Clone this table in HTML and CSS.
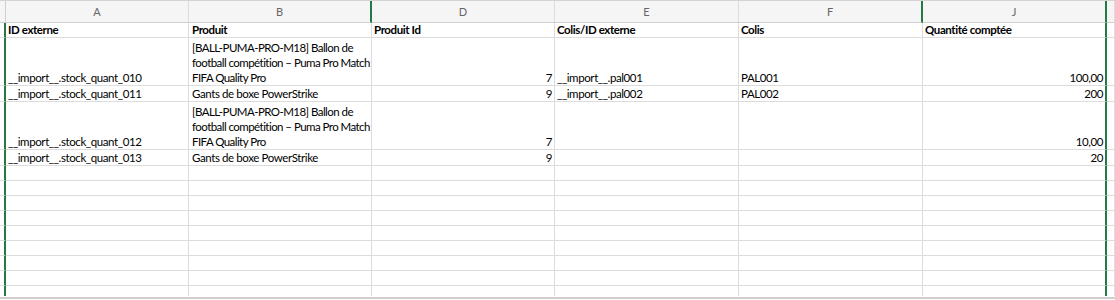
FILE: index.html
```html
<!DOCTYPE html>
<html lang="fr">
<head>
    <meta charset="UTF-8">
    <meta name="viewport" content="width=device-width, initial-scale=1.0">
    <title>stock_quant export</title>
    <link rel="stylesheet" href="styles.css">
</head>
<body>
    <div class="sheet">
        <table class="grid">
            <colgroup>
                <col class="c-stub">
                <col class="c-a">
                <col class="c-b">
                <col class="c-d">
                <col class="c-e">
                <col class="c-f">
                <col class="c-j">
                <col class="c-rest">
            </colgroup>
            <thead>
                <tr class="col-heads">
                    <th></th>
                    <th>A</th>
                    <th class="hidden-after">B</th>
                    <th>D</th>
                    <th>E</th>
                    <th class="hidden-after">F</th>
                    <th class="edge">J</th>
                    <th></th>
                </tr>
            </thead>
            <tbody>
                <tr class="row">
                    <td class="stub"></td>
                    <td class="bold">ID externe</td>
                    <td class="bold">Produit</td>
                    <td class="bold">Produit Id</td>
                    <td class="bold">Colis/ID externe</td>
                    <td class="bold">Colis</td>
                    <td class="bold edge">Quantité comptée</td>
                    <td></td>
                </tr>
                <tr class="row tall">
                    <td class="stub"></td>
                    <td>__import__.stock_quant_010</td>
                    <td class="wrap">[BALL-PUMA-PRO-M18] Ballon de<br>football compétition – Puma Pro Match<br>FIFA Quality Pro</td>
                    <td class="num">7</td>
                    <td>__import__.pal001</td>
                    <td>PAL001</td>
                    <td class="num edge">100,00</td>
                    <td></td>
                </tr>
                <tr class="row mid">
                    <td class="stub"></td>
                    <td>__import__.stock_quant_011</td>
                    <td>Gants de boxe PowerStrike</td>
                    <td class="num">9</td>
                    <td>__import__.pal002</td>
                    <td>PAL002</td>
                    <td class="num edge">200</td>
                    <td></td>
                </tr>
                <tr class="row tall">
                    <td class="stub"></td>
                    <td>__import__.stock_quant_012</td>
                    <td class="wrap">[BALL-PUMA-PRO-M18] Ballon de<br>football compétition – Puma Pro Match<br>FIFA Quality Pro</td>
                    <td class="num">7</td>
                    <td></td>
                    <td></td>
                    <td class="num edge">10,00</td>
                    <td></td>
                </tr>
                <tr class="row mid">
                    <td class="stub"></td>
                    <td>__import__.stock_quant_013</td>
                    <td>Gants de boxe PowerStrike</td>
                    <td class="num">9</td>
                    <td></td>
                    <td></td>
                    <td class="num edge">20</td>
                    <td></td>
                </tr>
            </tbody>
            <tbody id="blank-rows"></tbody>
        </table>
    </div>
    <div class="hscroll"></div>

    <script>
        // empty rows below the data
        const blankBody = document.getElementById('blank-rows');
        for (let r = 0; r < 9; r++) {
            const tr = document.createElement('tr');
            tr.className = 'row';
            for (let c = 0; c < 8; c++) {
                const td = document.createElement('td');
                if (c === 0) td.className = 'stub';
                if (c === 6) td.className = 'edge';
                tr.appendChild(td);
            }
            blankBody.appendChild(tr);
        }
    </script>
</body>
</html>
```

FILE: styles.css
```css
body {
    margin: 0;
    padding: 0;
    background-color: #fff;
    font-family: Lato, "Open Sans", sans-serif;
    font-size: 11.5px;
    letter-spacing: -0.4px;
    color: #000;
    overflow: hidden;
}
.sheet {
    height: 296px;
    overflow: hidden;
}
.grid {
    table-layout: fixed;
    border-collapse: separate;
    border-spacing: 0;
    width: 1115px;
    border-top: 1px solid #d4d4d4;
}
.c-stub { width: 6px; }
.c-a, .c-b, .c-d { width: 183px; }
.c-e, .c-f, .c-j { width: 184px; }
.c-rest { width: 8px; }

.col-heads th {
    height: 22px;
    padding: 0;
    background-color: #f5f5f5;
    color: #666;
    font-size: 11px;
    font-weight: normal;
    letter-spacing: 0;
    text-align: center;
    border-right: 1px solid #dcdcdc;
    border-bottom: 1px solid #cfcfcf;
    box-sizing: border-box;
}
.col-heads th:first-child {
    border-right: 1px solid #d0d0d0;
}
.col-heads th.hidden-after {
    border-right: 2px solid #237a47;
}

.row td {
    height: 15px;
    padding: 0 2px 0 2px;
    line-height: 14px;
    vertical-align: bottom;
    white-space: nowrap;
    overflow: hidden;
    border-right: 1px solid #dcdcdc;
    border-bottom: 1px solid #dcdcdc;
    box-sizing: border-box;
}
.row.mid td {
    height: 16px;
}
.row.tall td {
    height: 48px;
    line-height: 15px;
}
.row td.stub {
    padding: 0;
    border-right: 2px solid #237a47;
}
.row td:nth-child(3) {
    padding-left: 3px;
}
.row td.wrap {
    padding-right: 0;
    letter-spacing: -0.55px;
}
.col-heads th.edge,
.row td.edge {
    border-right: 2px solid #237a47;
}
.bold {
    font-weight: bold;
}
.num {
    text-align: right;
}
.hscroll {
    height: 2px;
    margin-top: 1px;
    background-color: #cfcfcf;
}
```
